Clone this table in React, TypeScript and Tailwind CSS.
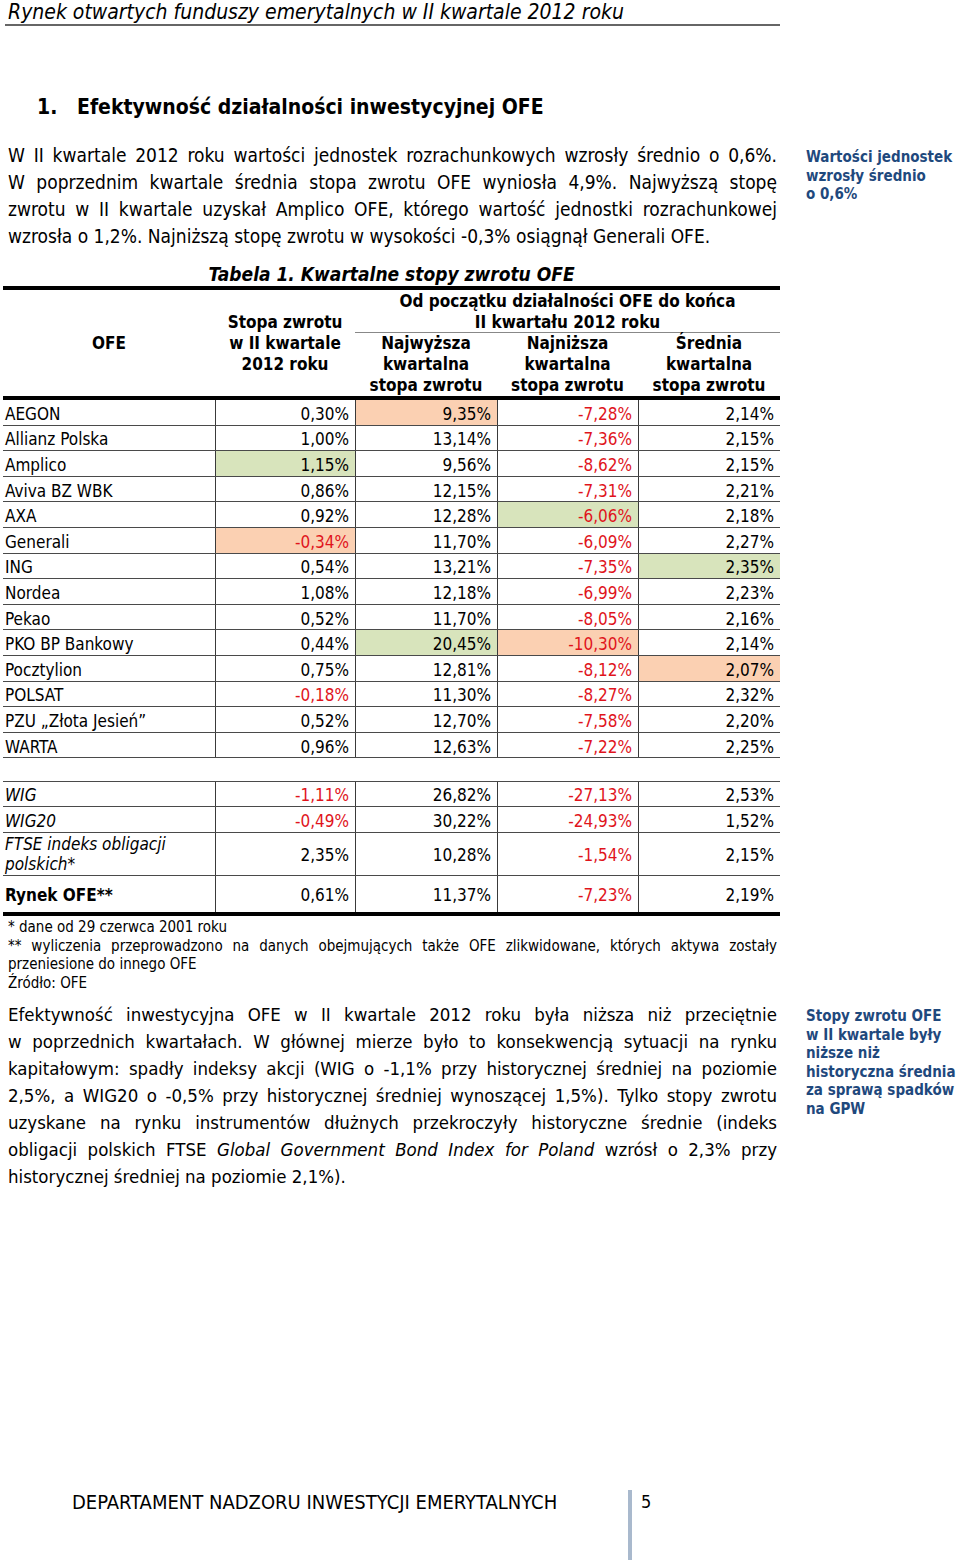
import React from 'react';

const PEACH = 'bg-[#fbd0b2]';
const GREEN = 'bg-[#d8e4bc]';
const RED = 'text-[#e0141c]';
const COLS = ['w-[140px]', 'w-[142px]', 'w-[141px]', 'w-[142px]'];

const funds: [string, string[], string[]][] = [
  ['AEGON', ['0,30%', '9,35%', '-7,28%', '2,14%'], ['', 'p', '', '']],
  ['Allianz Polska', ['1,00%', '13,14%', '-7,36%', '2,15%'], ['', '', '', '']],
  ['Amplico', ['1,15%', '9,56%', '-8,62%', '2,15%'], ['g', '', '', '']],
  ['Aviva BZ WBK', ['0,86%', '12,15%', '-7,31%', '2,21%'], ['', '', '', '']],
  ['AXA', ['0,92%', '12,28%', '-6,06%', '2,18%'], ['', '', 'g', '']],
  ['Generali', ['-0,34%', '11,70%', '-6,09%', '2,27%'], ['p', '', '', '']],
  ['ING', ['0,54%', '13,21%', '-7,35%', '2,35%'], ['', '', '', 'g']],
  ['Nordea', ['1,08%', '12,18%', '-6,99%', '2,23%'], ['', '', '', '']],
  ['Pekao', ['0,52%', '11,70%', '-8,05%', '2,16%'], ['', '', '', '']],
  ['PKO BP Bankowy', ['0,44%', '20,45%', '-10,30%', '2,14%'], ['', 'g', 'p', '']],
  ['Pocztylion', ['0,75%', '12,81%', '-8,12%', '2,07%'], ['', '', '', 'p']],
  ['POLSAT', ['-0,18%', '11,30%', '-8,27%', '2,32%'], ['', '', '', '']],
  ['PZU \u201EZłota Jesień\u201D', ['0,52%', '12,70%', '-7,58%', '2,20%'], ['', '', '', '']],
  ['WARTA', ['0,96%', '12,63%', '-7,22%', '2,25%'], ['', '', '', '']],
];

function Cells({ vals, hl = ['', '', '', ''] }: { vals: string[]; hl?: string[] }) {
  return (
    <>
      {vals.map((v, i) => (
        <div
          key={i}
          className={`${COLS[i]} border-l border-[#3a3a3a] flex items-center justify-end pr-[6px] pt-[3px] ${
            hl[i] === 'p' ? PEACH : hl[i] === 'g' ? GREEN : ''
          } ${v.startsWith('-') ? RED : ''}`}
        >
          {v}
        </div>
      ))}
    </>
  );
}

function Line({ children, last }: { children: React.ReactNode; last?: boolean }) {
  return (
    <div className={last ? 'whitespace-nowrap' : 'whitespace-nowrap text-justify [text-align-last:justify]'}>
      {children}
    </div>
  );
}

export default function App() {
  return (
    <div className="w-[960px] min-h-[1560px] flex flex-col bg-white text-black font-['DejaVu_Sans_Condensed','DejaVu_Sans',sans-serif] [font-stretch:semi-condensed] overflow-hidden">
      {/* page header */}
      <div className="ml-[5px] w-[775px] border-b-2 border-[#666] pl-[3px] text-[21px] leading-[24px] italic">
        Rynek otwartych funduszy emerytalnych w II kwartale 2012 roku
      </div>

      <h1 className="mt-[68px] flex text-[21px] leading-[27px] font-bold">
        <span className="ml-[37px] w-[40px]">1.</span>
        <span>Efektywność działalności inwestycyjnej OFE</span>
      </h1>

      <div className="mt-[21px] flex">
        <div className="ml-[8px] w-[769px] text-[19px] leading-[27px]">
          <Line>W II kwartale 2012 roku wartości jednostek rozrachunkowych wzrosły średnio o 0,6%.</Line>
          <Line>W poprzednim kwartale średnia stopa zwrotu OFE wyniosła 4,9%. Najwyższą stopę</Line>
          <Line>zwrotu w II kwartale uzyskał Amplico OFE, którego wartość jednostki rozrachunkowej</Line>
          <Line last>wzrosła o 1,2%. Najniższą stopę zwrotu w wysokości -0,3% osiągnął Generali OFE.</Line>
        </div>
        <div className="ml-[29px] mt-[6px] whitespace-nowrap text-[15px] leading-[18.5px] font-bold text-[#1f497d]">
          Wartości jednostek
          <br />
          wzrosły średnio
          <br />o 0,6%
        </div>
      </div>

      {/* table */}
      <div className="mt-[13px] ml-[3px] w-[777px] text-[17px]">
        <div className="text-center text-[19px] leading-[23px] font-bold italic">
          Tabela 1. Kwartalne stopy zwrotu OFE
        </div>
        <div className="border-t-[4px] border-b-[4px] border-black flex h-[114px] font-bold leading-[21px] text-center">
          <div className="w-[212px] flex items-center justify-center">OFE</div>
          <div className="w-[140px] flex items-center justify-center">
            <div>
              Stopa zwrotu
              <br />w II kwartale
              <br />
              2012 roku
            </div>
          </div>
          <div className="w-[425px] flex flex-col">
            <div className="border-b border-[#888] leading-[20.5px] pt-[1px]">
              Od początku działalności OFE do końca
              <br />
              II kwartału 2012 roku
            </div>
            <div className="flex flex-1 items-end pb-[2px]">
              <div className="w-[142px]">
                Najwyższa
                <br />
                kwartalna
                <br />
                stopa zwrotu
              </div>
              <div className="w-[141px]">
                Najniższa
                <br />
                kwartalna
                <br />
                stopa zwrotu
              </div>
              <div className="w-[142px]">
                Średnia
                <br />
                kwartalna
                <br />
                stopa zwrotu
              </div>
            </div>
          </div>
        </div>

        {funds.map(([name, vals, hl]) => (
          <div key={name} className="flex h-[25.6px] border-b border-[#4a4a4a] leading-[20px]">
            <div className="w-[212px] pl-[2px] pt-[3px] flex items-center">{name}</div>
            <Cells vals={vals} hl={hl} />
          </div>
        ))}

        <div className="mt-[23px] border-t border-b-[4px] border-t-[#4a4a4a] border-b-black leading-[20.5px]">
          <div className="flex h-[24.5px] border-b border-[#4a4a4a]">
            <div className="w-[212px] pl-[2px] pt-[3px] flex items-center italic">WIG</div>
            <Cells vals={['-1,11%', '26,82%', '-27,13%', '2,53%']} />
          </div>
          <div className="flex h-[26px] border-b border-[#4a4a4a]">
            <div className="w-[212px] pl-[2px] pt-[3px] flex items-center italic">WIG20</div>
            <Cells vals={['-0,49%', '30,22%', '-24,93%', '1,52%']} />
          </div>
          <div className="flex h-[43px] border-b border-[#4a4a4a]">
            <div className="w-[212px] pl-[2px] pt-[1px] flex items-center italic">
              FTSE indeks obligacji
              <br />
              polskich*
            </div>
            <Cells vals={['2,35%', '10,28%', '-1,54%', '2,15%']} />
          </div>
          <div className="flex h-[36.5px]">
            <div className="w-[212px] pl-[2px] pt-[3px] flex items-center font-bold">Rynek OFE**</div>
            <Cells vals={['0,61%', '11,37%', '-7,23%', '2,19%']} />
          </div>
        </div>
      </div>

      {/* footnotes */}
      <div className="mt-[2px] ml-[8px] w-[769px] text-[15px] leading-[18.4px]">
        <Line last>* dane od 29 czerwca 2001 roku</Line>
        <Line>** wyliczenia przeprowadzono na danych obejmujących także OFE zlikwidowane, których aktywa zostały</Line>
        <Line last>przeniesione do innego OFE</Line>
        <Line last>Źródło: OFE</Line>
      </div>

      <div className="mt-[9px] flex">
        <div className="ml-[8px] w-[769px] text-[18.5px] leading-[27px]">
          <Line>Efektywność inwestycyjna OFE w II kwartale 2012 roku była niższa niż przeciętnie</Line>
          <Line>w poprzednich kwartałach. W głównej mierze było to konsekwencją sytuacji na rynku</Line>
          <Line>kapitałowym: spadły indeksy akcji (WIG o -1,1% przy historycznej średniej na poziomie</Line>
          <Line>2,5%, a WIG20 o -0,5% przy historycznej średniej wynoszącej 1,5%). Tylko stopy zwrotu</Line>
          <Line>uzyskane na rynku instrumentów dłużnych przekroczyły historyczne średnie (indeks</Line>
          <Line>
            obligacji polskich FTSE <i>Global Government Bond Index for Poland</i> wzrósł o 2,3% przy
          </Line>
          <Line last>historycznej średniej na poziomie 2,1%).</Line>
        </div>
        <div className="ml-[29px] mt-[6px] whitespace-nowrap text-[15px] leading-[18.6px] font-bold text-[#1f497d]">
          Stopy zwrotu OFE
          <br />w II kwartale były
          <br />
          niższe niż
          <br />
          historyczna średnia
          <br />
          za sprawą spadków
          <br />
          na GPW
        </div>
      </div>

      {/* footer */}
      <div className="mt-auto flex h-[70px]">
        <div className="ml-[72px] w-[556px] text-[20px] leading-[24px]">DEPARTAMENT NADZORU INWESTYCJI EMERYTALNYCH</div>
        <div className="w-[4px] bg-[#a9b9cd]" />
        <div className="ml-[9px] text-[18px] leading-[24px]">5</div>
      </div>
    </div>
  );
}
